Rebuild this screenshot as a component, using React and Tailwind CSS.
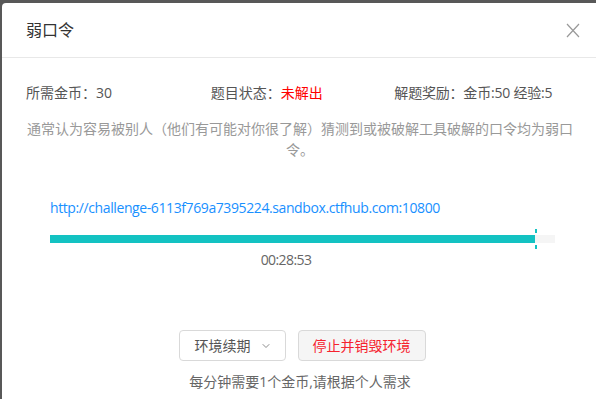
import { ChevronDown } from 'lucide-react'

const font = { fontFamily: '"Open Sans", "Noto Sans CJK SC", sans-serif' }

export default function App() {
  const percent = 96

  return (
    <div className="h-screen overflow-hidden bg-[#585858] pl-[2px] pt-[3px]" style={font}>
      <div className="w-[596px] h-[420px] bg-white rounded-tl-[4px]">
        {/* header */}
        <div className="flex items-center justify-between px-6 py-4 border-b border-[#e8e8e8]">
          <h2 className="text-[16px] leading-[22px] text-[#333]">弱口令</h2>
          <button className="mr-[-6px] text-[#999]">
            <svg width="14" height="15" viewBox="0 0 14 15" fill="none" stroke="currentColor" strokeWidth="1.2">
              <path d="M1 1 L13 14 M13 1 L1 14" />
            </svg>
          </button>
        </div>

        {/* body */}
        <div className="px-6 pt-6">
          <div className="grid grid-cols-3 text-[14px] leading-[22px] text-[#555]">
            <div>所需金币：30</div>
            <div className="pl-[2px]">题目状态：<span className="text-[#ff0000]">未解出</span></div>
            <div className="pl-[3px] tracking-[-0.2px]">解题奖励：金币:50 经验:5</div>
          </div>

          <p className="mt-[14px] text-center text-[14px] leading-[21px] text-[#999]">
            通常认为容易被别人（他们有可能对你很了解）猜测到或被破解工具破解的口令均为弱口令。
          </p>

          <div className="px-6 mt-[37px]">
            <a className="block text-[14px] leading-[22px] tracking-[-0.4px] text-[#1890ff]">
              http://challenge-6113f769a7395224.sandbox.ctfhub.com:10800
            </a>

            <div className="relative mt-[16px] w-[505px] h-[8px] bg-[#f5f5f5]">
              <div className="h-full bg-[#13c2c2]" style={{ width: `${percent}%` }} />
              <div className="absolute left-[485px] top-[-6px] w-[2px] h-[4px] bg-[#13c2c2]" />
              <div className="absolute left-[485px] bottom-[-6px] w-[2px] h-[4px] bg-[#13c2c2]" />
            </div>

            <div className="w-[472px] mt-[7px] text-center text-[14px] leading-[20px] tracking-[-0.6px] text-[#666]">00:28:53</div>
          </div>

          <div className="mt-[60px] flex justify-center gap-[12px] pl-[4px]">
            <button className="flex items-center gap-[9px] h-[31px] pl-[15px] pr-[13px] border border-[#d9d9d9] rounded-[4px] bg-white text-[14px] text-[#555]">
              环境续期
              <ChevronDown size={12} strokeWidth={1.5} className="text-[#666]" />
            </button>
            <button className="h-[31px] px-[14px] border border-[#d9d9d9] rounded-[4px] bg-[#f5f5f5] text-[14px] text-[#f5222d]">
              停止并销毁环境
            </button>
          </div>

          <p className="mt-[11px] text-center text-[14px] leading-[20px] text-[#666]">
            每分钟需要1个金币,请根据个人需求
          </p>
        </div>
      </div>
    </div>
  )
}
